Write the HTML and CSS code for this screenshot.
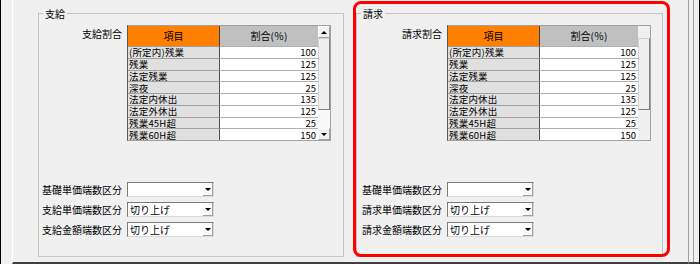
FILE: index.html
```html
<!DOCTYPE html>
<html lang="ja">
<head>
<meta charset="utf-8">
<title>支給・請求</title>
<link rel="stylesheet" href="styles.css">
</head>
<body>
<div class="screen">
  <div class="gutter"></div>
  <main class="panel">
    <fieldset class="group group--pay">
      <legend class="group__title">支給</legend>
      <div class="form">
        <div class="row row--table">
          <span class="label label--top">支給割合</span>
          <div class="ratio">
            <div class="sb">
              <div class="sb__btn"><i class="tri tri--up"></i></div>
              <div class="sb__thumb"></div>
              <div class="sb__track"></div>
              <div class="sb__btn"><i class="tri tri--down"></i></div>
            </div>
            <div class="ratio__head ratio__head--item">項目</div>
            <div class="ratio__head ratio__head--rate">割合(％)</div>
            <div class="ratio__name">(所定内)残業</div><div class="ratio__val">100</div>
            <div class="ratio__name">残業</div><div class="ratio__val">125</div>
            <div class="ratio__name">法定残業</div><div class="ratio__val">125</div>
            <div class="ratio__name">深夜</div><div class="ratio__val">25</div>
            <div class="ratio__name">法定内休出</div><div class="ratio__val">135</div>
            <div class="ratio__name">法定外休出</div><div class="ratio__val">125</div>
            <div class="ratio__name">残業45H超</div><div class="ratio__val">25</div>
            <div class="ratio__name">残業60H超</div><div class="ratio__val">150</div>
          </div>
        </div>
        <div class="selects">
          <div class="row"><span class="label">基礎単価端数区分</span><div class="combo"><span class="combo__text"></span><span class="combo__btn"><i class="tri tri--down"></i></span></div></div>
          <div class="row"><span class="label">支給単価端数区分</span><div class="combo"><span class="combo__text">切り上げ</span><span class="combo__btn"><i class="tri tri--down"></i></span></div></div>
          <div class="row"><span class="label">支給金額端数区分</span><div class="combo"><span class="combo__text">切り上げ</span><span class="combo__btn"><i class="tri tri--down"></i></span></div></div>
        </div>
      </div>
    </fieldset>
    <fieldset class="group group--bill">
      <legend class="group__title">請求</legend>
      <div class="form">
        <div class="row row--table">
          <span class="label label--top">請求割合</span>
          <div class="ratio">
            <div class="sb">
              <div class="sb__blank"></div>
              <div class="sb__thumb"></div>
              <div class="sb__track sb__track--plain"></div>
            </div>
            <div class="ratio__head ratio__head--item">項目</div>
            <div class="ratio__head ratio__head--rate">割合(％)</div>
            <div class="ratio__name">(所定内)残業</div><div class="ratio__val">100</div>
            <div class="ratio__name">残業</div><div class="ratio__val">125</div>
            <div class="ratio__name">法定残業</div><div class="ratio__val">125</div>
            <div class="ratio__name">深夜</div><div class="ratio__val">25</div>
            <div class="ratio__name">法定内休出</div><div class="ratio__val">135</div>
            <div class="ratio__name">法定外休出</div><div class="ratio__val">125</div>
            <div class="ratio__name">残業45H超</div><div class="ratio__val">25</div>
            <div class="ratio__name">残業60H超</div><div class="ratio__val">150</div>
          </div>
        </div>
        <div class="selects">
          <div class="row"><span class="label">基礎単価端数区分</span><div class="combo"><span class="combo__text"></span><span class="combo__btn"><i class="tri tri--down"></i></span></div></div>
          <div class="row"><span class="label">請求単価端数区分</span><div class="combo"><span class="combo__text">切り上げ</span><span class="combo__btn"><i class="tri tri--down"></i></span></div></div>
          <div class="row"><span class="label">請求金額端数区分</span><div class="combo"><span class="combo__text">切り上げ</span><span class="combo__btn"><i class="tri tri--down"></i></span></div></div>
        </div>
      </div>
    </fieldset>
  </main>
  <div class="rframe"><div class="rframe__line"></div></div>
  <div class="highlight"></div>
</div>
</body>
</html>
```

FILE: styles.css
```css
html, body {
  margin: 0;
  background: #f0f0f0;
}
body {
  font-family: "Noto Sans CJK JP", "Noto Sans", sans-serif;
  font-size: 10px;
  color: #000;
}
.screen {
  position: relative;
  display: flex;
  width: 700px;
  height: 264px;
  box-sizing: border-box;
  border-left: 1px solid #000;
  border-right: 1px solid #000;
  background: #f0f0f0;
  overflow: hidden;
}
.gutter {
  flex: none;
  width: 11px;
}
.panel {
  flex: none;
  width: 677px;
  height: 264px;
  box-sizing: border-box;
  border-left: 1px solid #fff;
  border-right: 1px solid #a0a0a0;
  border-bottom: 2px solid #404040;
  padding: 6px 0 0 25px;
  display: flex;
  gap: 12px;
  align-items: flex-start;
}
.rframe {
  flex: none;
  width: 10px;
  box-sizing: border-box;
  padding-left: 4px;
  border-bottom: 2px solid #404040;
  display: flex;
}
.rframe__line {
  border-left: 1px solid #a0a0a0;
}

/* group boxes */
.group {
  margin: 0;
  padding: 5px 0 0;
  border: 1px solid #c4c4c4;
  height: 251px;
  box-sizing: border-box;
  min-width: 0;
}
.group--pay {
  width: 306px;
  --label-w: 83px;
}
.group--bill {
  width: 307px;
  --label-w: 85px;
}
.group__title {
  margin-left: 4px;
  padding: 2px 2px 0;
  font-size: 10px;
  line-height: 12px;
}

.form {
  display: flex;
  flex-direction: column;
  gap: 5px;
}
.row {
  display: flex;
  gap: 5px;
  align-items: center;
}
.row--table {
  align-items: flex-start;
}
.label {
  flex: none;
  width: var(--label-w);
  text-align: right;
  white-space: nowrap;
  line-height: 12px;
}
.label--top {
  padding-top: 3px;
}
.selects {
  margin-top: 36px;
  display: flex;
  flex-direction: column;
  gap: 5px;
}

/* ratio grid */
.ratio {
  display: grid;
  grid-template-columns: 92px 98px 12px;
  grid-template-rows: 20px repeat(8, 11.75px);
  width: 204px;
  box-sizing: border-box;
  border: 1px solid #a0a0a0;
  border-left-color: #5a5a5a;
  background: #fff;
  font-size: 9.5px;
  line-height: 10px;
}
.ratio__head {
  display: flex;
  align-items: center;
  justify-content: center;
  font-size: 10px;
}
.ratio__head--item {
  background: #ff8000;
  border-right: 1px solid #404040;
}
.ratio__head--rate {
  background: #c0c0c0;
}
.ratio__name {
  background: #e0e0e0;
  border-top: 1px solid #a0a0a0;
  border-right: 1px solid #505050;
  padding-left: 1px;
  display: flex;
  align-items: center;
  white-space: nowrap;
  letter-spacing: 0.2px;
}
.ratio__val {
  background: #fff;
  border-top: 1px solid #b0b0b0;
  padding-right: 2px;
  display: flex;
  align-items: center;
  justify-content: flex-end;
}

/* scrollbar */
.sb {
  grid-column: 3;
  grid-row: 1 / -1;
  display: flex;
  flex-direction: column;
  background: #f0f0f0;
}
.sb__btn {
  height: 12px;
  box-sizing: border-box;
  border: 1px solid;
  border-color: #fff #a0a0a0 #a0a0a0 #fff;
  display: flex;
  align-items: center;
  justify-content: center;
  background: #f0f0f0;
}
.sb__blank {
  height: 12px;
}
.sb__thumb {
  height: 72px;
  box-sizing: border-box;
  border: 1px solid;
  border-color: #d0d0d0 #808080 #808080 #d0d0d0;
  background: #f0f0f0;
}
.sb__track {
  flex: 1;
  background: #f8f8f8;
}
.sb__track--plain {
  background: #f0f0f0;
}

.tri {
  display: block;
  width: 0;
  height: 0;
  border-left: 3px solid transparent;
  border-right: 3px solid transparent;
}
.tri--up {
  border-bottom: 3px solid #000;
}
.tri--down {
  border-top: 3px solid #000;
}

/* combo boxes */
.combo {
  width: 87px;
  height: 15px;
  box-sizing: border-box;
  border: 1px solid;
  border-color: #7a7a7a #d8d8d8 #d8d8d8 #7a7a7a;
  background: #fff;
  display: flex;
  align-items: center;
}
.combo__text {
  flex: 1;
  padding-left: 2px;
  line-height: 12px;
  white-space: nowrap;
}
.combo__btn {
  width: 10px;
  align-self: stretch;
  box-sizing: border-box;
  border-right: 1px solid #a0a0a0;
  border-bottom: 1px solid #a0a0a0;
  background: #fafafa;
  display: flex;
  align-items: center;
  justify-content: center;
}

/* annotation */
.highlight {
  position: absolute;
  left: 352px;
  top: 1px;
  width: 317px;
  height: 256px;
  box-sizing: border-box;
  border: 3px solid #f00;
  border-radius: 8px;
  pointer-events: none;
}
```
